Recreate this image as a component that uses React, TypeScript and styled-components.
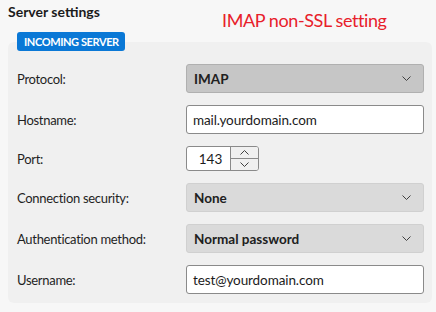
import React from "react";
import styled, { createGlobalStyle } from "styled-components";

const Global = createGlobalStyle`
  html, body { margin: 0; padding: 0; background: #f7f7f7; }
  body { font-family: Lato, "Noto Sans", sans-serif; color: #1b1b1b; }
`;

const Page = styled.div`
  width: 436px;
  height: 312px;
  box-sizing: border-box;
  padding: 0 4px 0 8px;
`;

const Header = styled.div`
  display: flex;
  align-items: flex-start;
  height: 32px;
`;

const Title = styled.h2`
  margin: 2px 0 0 0;
  font-size: 14px;
  font-weight: 700;
  line-height: 20px;
  width: 214px;
`;

const Note = styled.div`
  margin-top: 8px;
  font-size: 18px;
  line-height: 24px;
  letter-spacing: -0.4px;
  color: #e8202a;
`;

const Fieldset = styled.div`
  position: relative;
  margin-top: 10px;
  background: #f0f0f0;
  border-radius: 6px;
  padding: 22px 8px 9px 9px;
  display: flex;
  flex-direction: column;
  gap: 12px;
`;

const Badge = styled.div`
  position: absolute;
  left: 9px;
  top: -10px;
  height: 19px;
  padding: 0 6px 0 7px;
  background: #0a78d6;
  color: #fff;
  border-radius: 3px;
  font-size: 11px;
  font-weight: 700;
  letter-spacing: -0.4px;
  line-height: 19px;
`;

const Row = styled.div`
  display: grid;
  grid-template-columns: 169px 1fr;
  align-items: center;
`;

const Label = styled.label`
  font-size: 13px;
  letter-spacing: -0.3px;
  color: #1f1f1f;
`;

const Select = styled.div<{ $active?: boolean }>`
  height: 29px;
  box-sizing: border-box;
  border-radius: 3px;
  border: 1px solid ${(p) => (p.$active ? "#b0b0b0" : "#d0d0d0")};
  background: ${(p) => (p.$active ? "#c6c6c6" : "#dadada")};
  display: flex;
  align-items: center;
  justify-content: space-between;
  padding: 0 12px 0 7px;
  font-size: 13.5px;
  font-weight: 700;
  color: #202020;
`;

const Input = styled.div`
  height: 29px;
  box-sizing: border-box;
  border-radius: 3px;
  border: 1px solid #8a8a8a;
  background: #fff;
  display: flex;
  align-items: center;
  padding: 0 6px;
  font-size: 13.5px;
  letter-spacing: -0.1px;
  color: #1b1b1b;
`;

const Spin = styled.div`
  display: flex;
  height: 25px;
  width: 73px;
  box-sizing: border-box;
  border: 1px solid #8a8a8a;
  border-radius: 3px;
  overflow: hidden;
  background: #fff;
`;

const SpinValue = styled.div`
  flex: 1;
  display: flex;
  align-items: center;
  justify-content: center;
  font-size: 13.5px;
  padding-left: 4px;
`;

const SpinButtons = styled.div`
  width: 27px;
  display: flex;
  flex-direction: column;
  border-left: 1px solid #8a8a8a;
  background: #f0f0f0;
`;

const SpinBtn = styled.div<{ $top?: boolean }>`
  flex: 1;
  display: flex;
  align-items: center;
  justify-content: center;
  border-bottom: ${(p) => (p.$top ? "1px solid #8a8a8a" : "none")};
`;

const Chevron = ({ up = false, w = 9 }: { up?: boolean; w?: number }) => (
  <svg width={w} height={5} viewBox="0 0 9 5" fill="none">
    <path
      d={up ? "M0.5 4.5 L4.5 0.5 L8.5 4.5" : "M0.5 0.5 L4.5 4.5 L8.5 0.5"}
      stroke="#404040"
      strokeWidth="1"
    />
  </svg>
);

export default function App() {
  return (
    <>
      <Global />
      <Page>
        <Header>
          <Title>Server settings</Title>
          <Note>IMAP non-SSL setting</Note>
        </Header>
        <Fieldset>
          <Badge>INCOMING SERVER</Badge>
          <Row>
            <Label>Protocol:</Label>
            <Select $active>
              <span>IMAP</span>
              <Chevron />
            </Select>
          </Row>
          <Row>
            <Label>Hostname:</Label>
            <Input>mail.yourdomain.com</Input>
          </Row>
          <Row>
            <Label>Port:</Label>
            <Spin>
              <SpinValue>143</SpinValue>
              <SpinButtons>
                <SpinBtn $top>
                  <Chevron up />
                </SpinBtn>
                <SpinBtn>
                  <Chevron />
                </SpinBtn>
              </SpinButtons>
            </Spin>
          </Row>
          <Row>
            <Label>Connection security:</Label>
            <Select>
              <span>None</span>
              <Chevron />
            </Select>
          </Row>
          <Row>
            <Label>Authentication method:</Label>
            <Select>
              <span>Normal password</span>
              <Chevron />
            </Select>
          </Row>
          <Row>
            <Label>Username:</Label>
            <Input>test@yourdomain.com</Input>
          </Row>
        </Fieldset>
      </Page>
    </>
  );
}
